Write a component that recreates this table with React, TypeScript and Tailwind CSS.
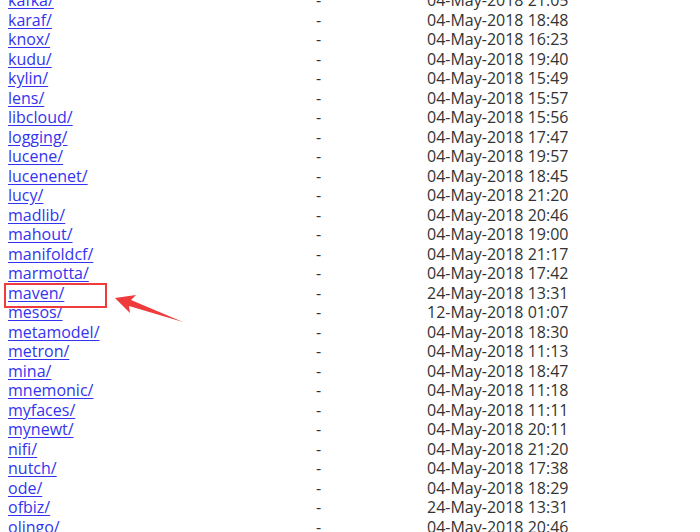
const rows: [string, string][] = [
  ["kafka/", "04-May-2018 21:05"],
  ["karaf/", "04-May-2018 18:48"],
  ["knox/", "04-May-2018 16:23"],
  ["kudu/", "04-May-2018 19:40"],
  ["kylin/", "04-May-2018 15:49"],
  ["lens/", "04-May-2018 15:57"],
  ["libcloud/", "04-May-2018 15:56"],
  ["logging/", "04-May-2018 17:47"],
  ["lucene/", "04-May-2018 19:57"],
  ["lucenenet/", "04-May-2018 18:45"],
  ["lucy/", "04-May-2018 21:20"],
  ["madlib/", "04-May-2018 20:46"],
  ["mahout/", "04-May-2018 19:00"],
  ["manifoldcf/", "04-May-2018 21:17"],
  ["marmotta/", "04-May-2018 17:42"],
  ["maven/", "24-May-2018 13:31"],
  ["mesos/", "12-May-2018 01:07"],
  ["metamodel/", "04-May-2018 18:30"],
  ["metron/", "04-May-2018 11:13"],
  ["mina/", "04-May-2018 18:47"],
  ["mnemonic/", "04-May-2018 11:18"],
  ["myfaces/", "04-May-2018 11:11"],
  ["mynewt/", "04-May-2018 20:11"],
  ["nifi/", "04-May-2018 21:20"],
  ["nutch/", "04-May-2018 17:38"],
  ["ode/", "04-May-2018 18:29"],
  ["ofbiz/", "24-May-2018 13:31"],
  ["olingo/", "04-May-2018 20:46"],
];

export default function App() {
  return (
    <div className="relative h-[532px] w-[700px] overflow-hidden bg-white font-['Open_Sans','Noto_Sans_CJK_SC',sans-serif] text-[16px]">
      <div className="-mt-[9px] grid grid-cols-[308px_111px_auto] pl-2">
        {rows.map(([name, date]) => (
          <div key={name} className="contents leading-[19.5px]">
            <a href="#" className="text-[#3434f0] underline underline-offset-2">
              {name}
            </a>
            <span className="text-[#333]">-</span>
            <span className="text-[#333]">{date}</span>
          </div>
        ))}
      </div>

      {/* highlight box + arrow */}
      <div className="absolute left-[4px] top-[283px] h-[25px] w-[103px] border-2 border-[#ef3b3b]" />
      <svg className="absolute left-0 top-0" width="700" height="532">
        <polygon
          points="115,298 136,295 131,300 183,322 129,306 130,313"
          fill="#ef3b3b"
        />
      </svg>
    </div>
  );
}
